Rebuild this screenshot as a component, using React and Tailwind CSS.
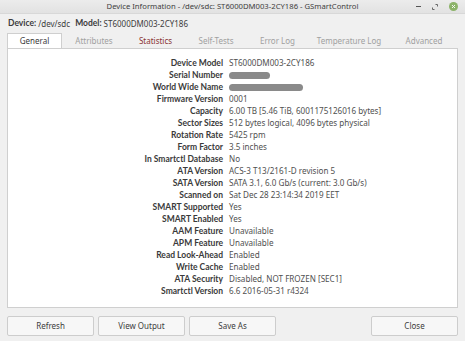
import React from 'react';

const ROWS = [
  ['Device Model', 'ST6000DM003-2CY186'],
  ['Serial Number', { blur: 41 }],
  ['World Wide Name', { blur: 74 }],
  ['Firmware Version', '0001'],
  ['Capacity', '6.00 TB [5.46 TiB, 6001175126016 bytes]'],
  ['Sector Sizes', '512 bytes logical, 4096 bytes physical'],
  ['Rotation Rate', '5425 rpm'],
  ['Form Factor', '3.5 inches'],
  ['In Smartctl Database', 'No'],
  ['ATA Version', 'ACS-3 T13/2161-D revision 5'],
  ['SATA Version', 'SATA 3.1, 6.0 Gb/s (current: 3.0 Gb/s)'],
  ['Scanned on', 'Sat Dec 28 23:14:34 2019 EET'],
  ['SMART Supported', 'Yes'],
  ['SMART Enabled', 'Yes'],
  ['AAM Feature', 'Unavailable'],
  ['APM Feature', 'Unavailable'],
  ['Read Look-Ahead', 'Enabled'],
  ['Write Cache', 'Enabled'],
  ['ATA Security', 'Disabled, NOT FROZEN [SEC1]'],
  ['Smartctl Version', '6.6 2016-05-31 r4324'],
];

const TABS = [
  { name: 'General', w: 55, cls: 'text-[#3a3a3a]' },
  { name: 'Attributes', w: 64, cls: 'text-[#a0a0a0]' },
  { name: 'Statistics', w: 59, cls: 'text-[#8a3434]' },
  { name: 'Self-Tests', w: 62, cls: 'text-[#a0a0a0]' },
  { name: 'Error Log', w: 61, cls: 'text-[#a0a0a0]' },
  { name: 'Temperature Log', w: 82, cls: 'text-[#a0a0a0]' },
  { name: 'Advanced', w: 68, cls: 'text-[#a0a0a0]' },
];

const Btn = ({ children }) => (
  <button className="w-[87px] h-[20px] bg-[#f7f7f7] border border-[#cdcdcd] rounded-[2px] text-[8px] text-[#3c3c3c]">
    {children}
  </button>
);

export default function App() {
  return (
    <div className="w-[465px] h-[341px] bg-[#f0f0f0] flex flex-col overflow-hidden" style={{ fontFamily: '"Noto Sans", "Open Sans", sans-serif' }}>
      {/* title bar */}
      <div className="h-[14px] bg-gradient-to-b from-[#ececec] to-[#e2e2e2] border-b border-[#d8d8d8] flex items-center">
        <div className="w-[60px]" />
        <div className="flex-1 text-center text-[7.7px] text-[#3e3e3e] leading-none">
          Device Information - /dev/sdc: ST6000DM003-2CY186 - GSmartControl
        </div>
        <div className="w-[60px] flex items-center justify-end gap-[11px] pr-[7px]">
          <span className="w-[5px] h-[1px] bg-[#555]" />
          <svg width="6" height="6" viewBox="0 0 6 6">
            <path d="M3.5 0.5h2v2M2.5 5.5h-2v-2" stroke="#666" strokeWidth="1" fill="none" />
          </svg>
          <span className="w-[9px] h-[9px] rounded-full bg-[#8cb369] flex items-center justify-center">
            <svg width="5" height="5" viewBox="0 0 5 5">
              <path d="M1 1l3 3M4 1l-3 3" stroke="#f3f7ee" strokeWidth="1" />
            </svg>
          </span>
        </div>
      </div>

      {/* device line */}
      <div className="h-[19px] px-[8px] flex items-center text-[8px] text-[#3c3c3c] leading-none">
        <span className="font-bold font-['Lato',sans-serif] text-[8.5px]">Device:</span>
        <span className="ml-[2px]">/dev/sdc</span>
        <span className="font-bold ml-[5px] font-['Lato',sans-serif] text-[8.5px]">Model:</span>
        <span className="ml-[2px]">ST6000DM003-2CY186</span>
      </div>

      {/* tabs */}
      <div className="mx-[7px] h-[15px] flex items-stretch">
        {TABS.map((t, i) => (
          <div
            key={t.name}
            className={`flex items-center justify-center text-[8px] leading-none ${t.cls} ${i === 0 ? 'bg-white border border-b-0 border-[#cfcfcf]' : ''}`}
            style={{ width: t.w }}
          >
            {t.name}
          </div>
        ))}
      </div>

      {/* panel */}
      <div className="mx-[7px] h-[260px] bg-white border border-[#cfcfcf] pt-[8px]">
        <div className="grid grid-cols-[215px_1fr] gap-x-[6px]">
          {ROWS.map(([label, value]) => (
            <React.Fragment key={label}>
              <div className="h-[12px] flex items-center justify-end text-[8.5px] font-bold text-[#3a3a3a] leading-none font-['Lato',sans-serif]">
                {label}
              </div>
              <div className="h-[12px] flex items-center text-[8.1px] text-[#505050] leading-none">
                {typeof value === 'string' ? (
                  value
                ) : (
                  <span className="h-[7px] rounded-full bg-[#8a8a8a]" style={{ width: value.blur }} />
                )}
              </div>
            </React.Fragment>
          ))}
        </div>
      </div>

      {/* buttons */}
      <div className="mt-[8px] px-[7px] flex items-center gap-[4px]">
        <Btn>Refresh</Btn>
        <Btn>View Output</Btn>
        <Btn>Save As</Btn>
        <div className="flex-1" />
        <Btn>Close</Btn>
      </div>
    </div>
  );
}
